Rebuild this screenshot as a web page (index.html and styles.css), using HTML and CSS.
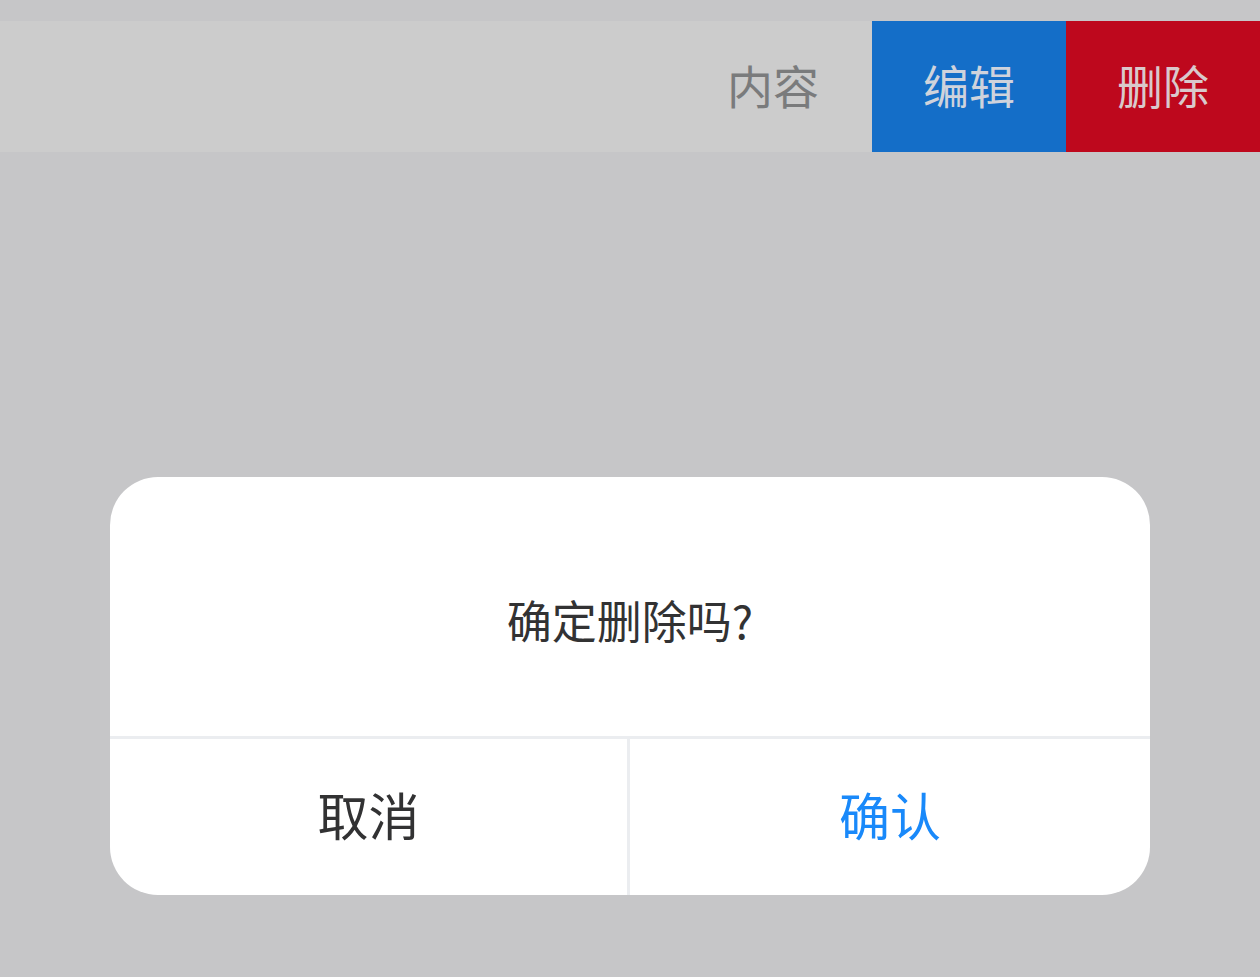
FILE: index.html
```html
<!DOCTYPE html>
<html lang="zh-CN">
<head>
<meta charset="utf-8">
<title>删除确认</title>
<link rel="stylesheet" href="styles.css">
</head>
<body>
<div class="page">
  <div class="swipe-row">
    <div class="cell">内容</div>
    <div class="action action-edit">编辑</div>
    <div class="action action-delete">删除</div>
  </div>
</div>
<div class="dialog">
  <div class="dialog-message">确定删除吗?</div>
  <div class="dialog-footer">
    <div class="dialog-btn dialog-cancel">取消</div>
    <div class="dialog-btn dialog-confirm">确认</div>
  </div>
</div>
</body>
</html>
```
FILE: styles.css
```css
html, body {
  margin: 0;
  padding: 0;
  height: 100%;
}
body {
  background: #c6c6c8;
  font-family: "Noto Sans CJK SC", "Noto Sans", sans-serif;
  overflow: hidden;
}
.page {
  padding-top: 21px;
}
.swipe-row {
  display: flex;
  height: 131px;
  background: #cccccc;
}
.cell {
  flex: 1;
  display: flex;
  align-items: center;
  justify-content: flex-end;
  padding-right: 53px;
  padding-bottom: 5px;
  font-size: 46px;
  color: #7a7b7c;
}
.action {
  width: 194px;
  display: flex;
  align-items: center;
  justify-content: center;
  padding-bottom: 5px;
  font-size: 46px;
  color: #cfd3dc;
}
.action-edit {
  background: #146ec8;
}
.action-delete {
  background: #be081d;
  color: #d9c9cc;
}
.dialog {
  position: absolute;
  left: 110px;
  top: 477px;
  width: 1040px;
  height: 418px;
  background: #ffffff;
  border-radius: 48px;
  overflow: hidden;
  display: flex;
  flex-direction: column;
}
.dialog-message {
  height: 234px;
  padding-top: 25px;
  display: flex;
  align-items: center;
  justify-content: center;
  font-size: 45px;
  color: #323233;
}
.dialog-footer {
  flex: 1;
  display: flex;
  border-top: 3px solid #ebedf0;
}
.dialog-btn {
  flex: 1;
  display: flex;
  align-items: center;
  justify-content: center;
  padding-bottom: 6px;
  font-size: 51px;
}
.dialog-cancel {
  color: #323233;
  border-right: 3px solid #ebedf0;
  flex: 0 0 517px;
}
.dialog-confirm {
  color: #1989fa;
}
```
